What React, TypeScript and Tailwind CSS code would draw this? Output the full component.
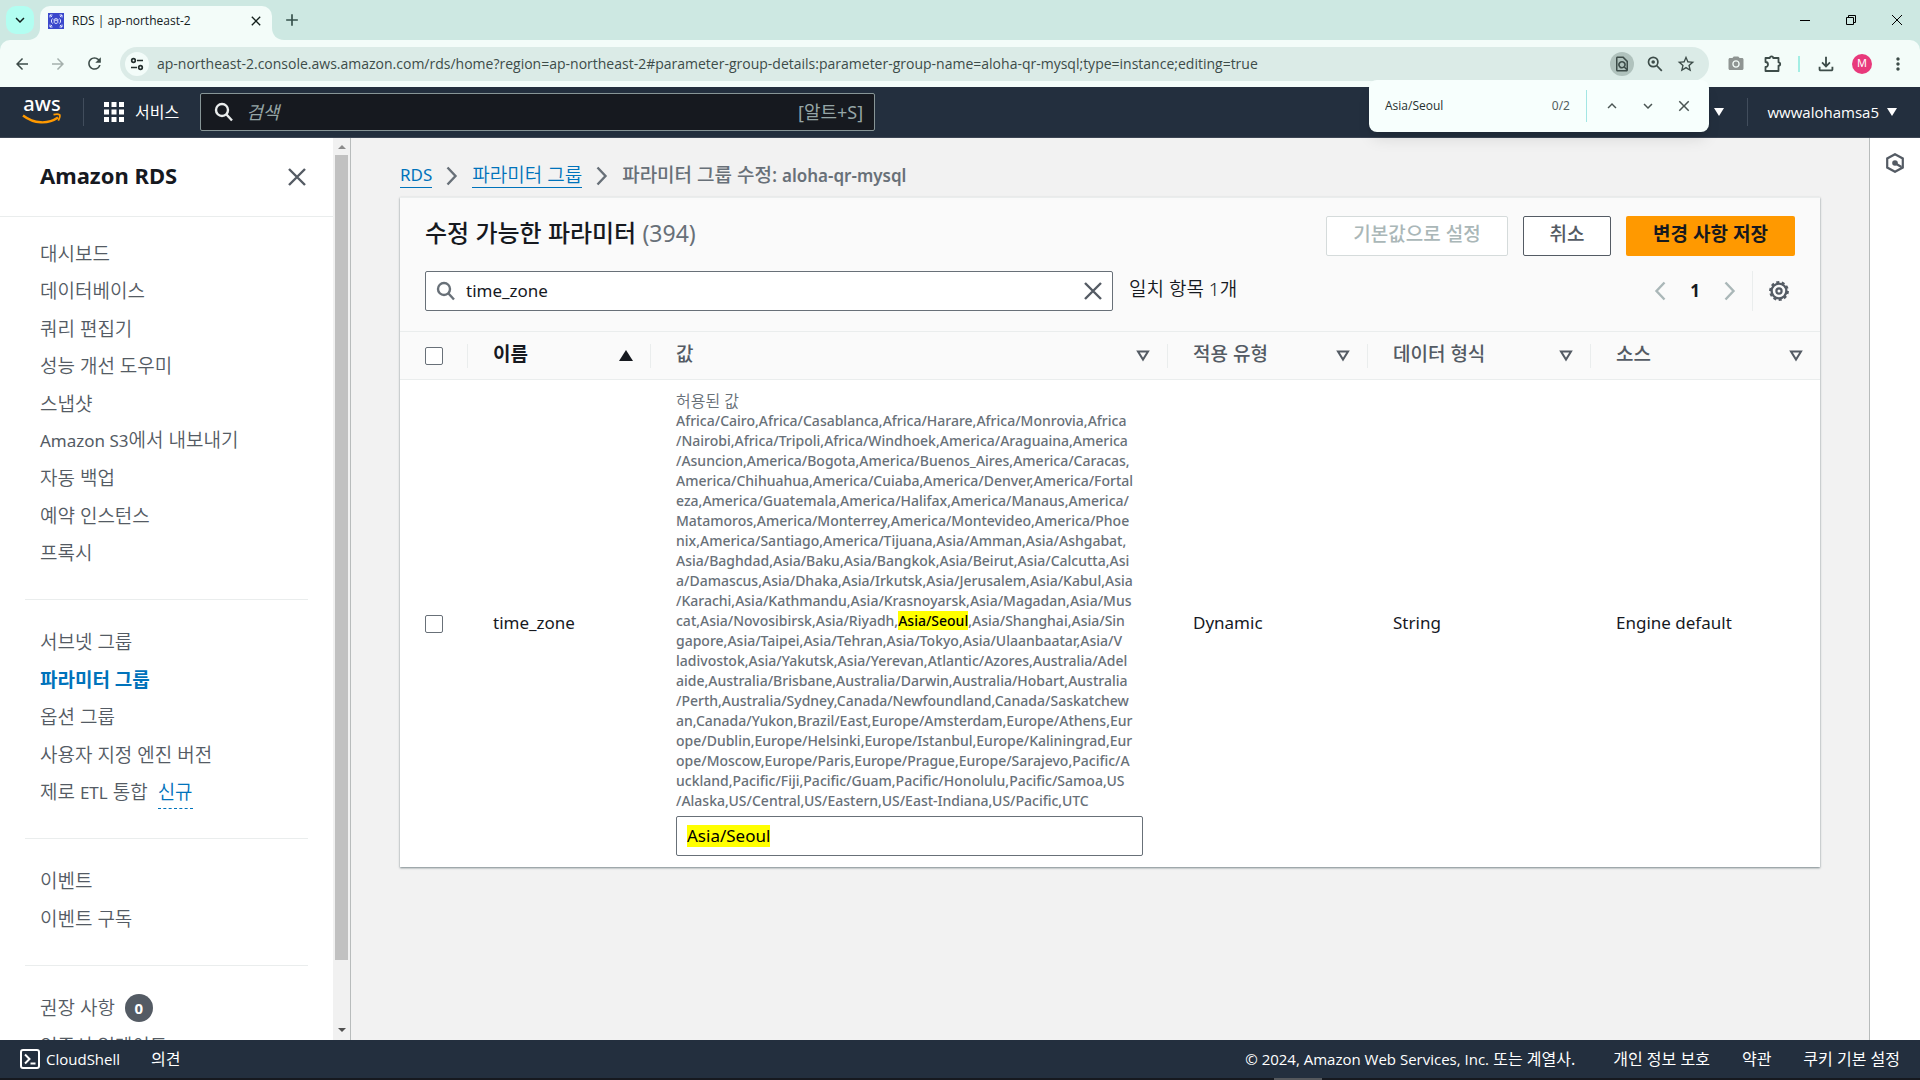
import { useState } from "react";
import type { ReactNode } from "react";
import {
  MdAdd,
  MdArrowBack,
  MdArrowForward,
  MdClose,
  MdKeyboardArrowDown,
  MdKeyboardArrowUp,
  MdMoreVert,
  MdOutlineFileDownload,
  MdOutlineFindInPage,
  MdPhotoCamera,
  MdRefresh,
  MdStarBorder,
} from "react-icons/md";

type NavItem = { label: ReactNode; active?: boolean; extra?: ReactNode };

const DATABASE_LINKS: NavItem[] = [
  { label: "대시보드" },
  { label: "데이터베이스" },
  { label: "쿼리 편집기" },
  { label: "성능 개선 도우미" },
  { label: "스냅샷" },
  {
    label: (
      <>
        <span className="text-[17px] font-normal">Amazon S3</span>에서 내보내기
      </>
    ),
  },
  { label: "자동 백업" },
  { label: "예약 인스턴스" },
  { label: "프록시" },
];

const GROUP_LINKS: NavItem[] = [
  { label: "서브넷 그룹" },
  { label: "파라미터 그룹", active: true },
  { label: "옵션 그룹" },
  { label: "사용자 지정 엔진 버전" },
  {
    label: (
      <>
        제로 <span className="text-[17px] font-normal">ETL</span> 통합
      </>
    ),
    extra: (
      <button className="ml-[10px] h-[28px] self-start border-b border-dashed border-[#0073bb] pb-[5px] font-[350] text-[#0073bb]">
        신규
      </button>
    ),
  },
];

const EVENT_LINKS: NavItem[] = [{ label: "이벤트" }, { label: "이벤트 구독" }];

const ADVICE_LINKS: NavItem[] = [
  {
    label: "권장 사항",
    extra: (
      <span className="ml-[10px] flex size-7 shrink-0 items-center justify-center rounded-full bg-[#545b64] text-[15px] font-bold text-white">
        0
      </span>
    ),
  },
  { label: "인증서 업데이트" },
];

// The console breaks this list mid-word, so the rows are kept as they are shown
const ALLOWED_ROWS = [
  "Africa/Cairo,Africa/Casablanca,Africa/Harare,Africa/Monrovia,Africa",
  "/Nairobi,Africa/Tripoli,Africa/Windhoek,America/Araguaina,America",
  "/Asuncion,America/Bogota,America/Buenos_Aires,America/Caracas,",
  "America/Chihuahua,America/Cuiaba,America/Denver,America/Fortal",
  "eza,America/Guatemala,America/Halifax,America/Manaus,America/",
  "Matamoros,America/Monterrey,America/Montevideo,America/Phoe",
  "nix,America/Santiago,America/Tijuana,Asia/Amman,Asia/Ashgabat,",
  "Asia/Baghdad,Asia/Baku,Asia/Bangkok,Asia/Beirut,Asia/Calcutta,Asi",
  "a/Damascus,Asia/Dhaka,Asia/Irkutsk,Asia/Jerusalem,Asia/Kabul,Asia",
  "/Karachi,Asia/Kathmandu,Asia/Krasnoyarsk,Asia/Magadan,Asia/Mus",
  "cat,Asia/Novosibirsk,Asia/Riyadh,Asia/Seoul,Asia/Shanghai,Asia/Sin",
  "gapore,Asia/Taipei,Asia/Tehran,Asia/Tokyo,Asia/Ulaanbaatar,Asia/V",
  "ladivostok,Asia/Yakutsk,Asia/Yerevan,Atlantic/Azores,Australia/Adel",
  "aide,Australia/Brisbane,Australia/Darwin,Australia/Hobart,Australia",
  "/Perth,Australia/Sydney,Canada/Newfoundland,Canada/Saskatchew",
  "an,Canada/Yukon,Brazil/East,Europe/Amsterdam,Europe/Athens,Eur",
  "ope/Dublin,Europe/Helsinki,Europe/Istanbul,Europe/Kaliningrad,Eur",
  "ope/Moscow,Europe/Paris,Europe/Prague,Europe/Sarajevo,Pacific/A",
  "uckland,Pacific/Fiji,Pacific/Guam,Pacific/Honolulu,Pacific/Samoa,US",
  "/Alaska,US/Central,US/Eastern,US/East-Indiana,US/Pacific,UTC",
];

const COLUMNS = ["값", "적용 유형", "데이터 형식", "소스"];

function TabFlare({ className }: { className: string }) {
  return (
    <svg viewBox="0 0 12 12" className={`absolute bottom-0 size-3 fill-[#f3fcf9] ${className}`}>
      <path d="M12 0v12H0C7 12 12 7 12 0Z" />
    </svg>
  );
}

function TabStrip() {
  return (
    <div className="flex h-10 shrink-0 items-end bg-[#cde8e2]">
      <button aria-label="Search tabs" className="mb-[6px] ml-[6px] flex size-7 items-center justify-center rounded-[10px] bg-[#b2fef1]">
        <MdKeyboardArrowDown className="size-[18px] text-[#12201d]" />
      </button>
      <div className="relative ml-[6px] flex h-[34px] w-[232px] items-center rounded-t-[10px] bg-[#f3fcf9] pb-[5px] pl-2">
        <TabFlare className="-left-3" />
        <TabFlare className="-right-3 -scale-x-100" />
        <svg viewBox="0 0 16 16" className="size-4 shrink-0">
          <rect width="16" height="16" fill="#3b48cc" />
          <g fill="none" stroke="#dfe3ff" strokeWidth="1">
            <path d="M2 4.500V2h2.500M11.500 2H14v2.500M14 11.500V14h-2.500M4.500 14H2v-2.500M2 2l2 2M14 2l-2 2M14 14l-2-2M2 14l2-2" />
            <ellipse cx="8" cy="6.500" rx="1.800" ry="0.800" />
            <path d="M6.200 6.500v3c0 1.200 3.600 1.200 3.600 0v-3M4.500 5.500C3 7 3 9 4.500 10.500M11.500 5.500c1.500 1.500 1.500 3.500 0 5" />
          </g>
        </svg>
        <span className="ml-2 flex-1 pt-px font-['Open_Sans'] text-[12px] text-[#14201d]">RDS | ap-northeast-2</span>
        <button aria-label="Close tab" className="mr-2">
          <MdClose className="size-4 text-[#14201d]" />
        </button>
      </div>
      <button aria-label="New tab" className="mb-[10px] ml-[10px]">
        <MdAdd className="size-5 text-[#35504b]" />
      </button>
      <div className="mb-[14px] ml-auto flex items-center gap-[34px] pr-[17px] text-black">
        <button aria-label="Minimize">
          <svg viewBox="0 0 12 12" className="size-3" stroke="currentColor">
            <path d="M1 6.500h10" />
          </svg>
        </button>
        <button aria-label="Restore">
          <svg viewBox="0 0 12 12" className="size-3" fill="none" stroke="currentColor">
            <path d="M1.500 3.500h7v7h-7zM3.500 3.500v-2h7v7h-2" />
          </svg>
        </button>
        <button aria-label="Close window">
          <svg viewBox="0 0 12 12" className="size-3" fill="none" stroke="currentColor">
            <path d="m1 1 10 10M11 1 1 11" />
          </svg>
        </button>
      </div>
    </div>
  );
}

function AddressBar() {
  return (
    <div className="flex h-[47px] shrink-0 items-center bg-[#cde8e2]">
      <div className="flex h-full flex-1 items-center rounded-t-[10px] bg-[#f3fcf9] text-[#3d4c49]">
        <button aria-label="Back" className="ml-[13px]">
          <MdArrowBack className="size-[18px]" />
        </button>
        <button aria-label="Forward" className="ml-[18px] text-[#a5b0ad]">
          <MdArrowForward className="size-[18px]" />
        </button>
        <button aria-label="Reload" className="ml-[18px]">
          <MdRefresh className="size-[19px]" />
        </button>
        <div className="ml-4 flex h-[34px] flex-1 items-center rounded-full bg-[#dbebe7] pl-[5px] pr-[13px]">
          <button aria-label="Site information" className="flex size-6 shrink-0 items-center justify-center rounded-full bg-[#f3fcf9]">
            <svg viewBox="0 0 16 16" className="size-4" fill="none" stroke="#24302e" strokeWidth="1.700">
              <circle cx="4.500" cy="4.500" r="1.800" />
              <path d="M8 4.500h6M2 11.500h6" />
              <circle cx="11.500" cy="11.500" r="1.800" />
            </svg>
          </button>
          <input
            aria-label="Address"
            className="ml-2 min-w-0 flex-1 bg-transparent font-['Open_Sans'] text-[14px] text-[#3d4c49] outline-none"
            defaultValue="ap-northeast-2.console.aws.amazon.com/rds/home?region=ap-northeast-2#parameter-group-details:parameter-group-name=aloha-qr-mysql;type=instance;editing=true"
          />
          <button aria-label="Find in page" className="flex size-6 items-center justify-center rounded-full bg-[#b0c2bd]">
            <MdOutlineFindInPage className="size-[18px]" />
          </button>
          <button aria-label="Zoom" className="ml-3">
            <svg viewBox="0 0 18 18" className="size-[18px]" fill="none" stroke="currentColor" strokeWidth="1.700">
              <circle cx="7.200" cy="7" r="4.700" />
              <path d="m10.600 10.500 5.200 5.300" />
              <circle cx="7.200" cy="7" r="1.800" fill="currentColor" stroke="none" />
            </svg>
          </button>
          <button aria-label="Bookmark" className="ml-3">
            <MdStarBorder className="size-5" />
          </button>
        </div>
        <button aria-label="Screenshot" className="ml-[18px] text-[#8f9593]">
          <MdPhotoCamera className="size-[18px]" />
        </button>
        <button aria-label="Extensions" className="ml-[18px]">
          <svg viewBox="0 0 20 20" className="size-5" fill="none" stroke="currentColor" strokeWidth="1.800" strokeLinejoin="round">
            <path d="M2.500 4h4.300a1.700 1.700 0 0 1 3.400 0h5.300v4.300a1.700 1.700 0 0 1 0 3.400V17h-13v-4a2.500 2.500 0 0 0 0-5Z" />
          </svg>
        </button>
        <span className="ml-[15px] h-4 w-[2px] bg-[#a3eee4]" />
        <button aria-label="Downloads" className="ml-[15px]">
          <MdOutlineFileDownload className="size-[22px]" />
        </button>
        <button aria-label="Profile" className="ml-[15px] flex size-5 items-center justify-center rounded-full bg-[#e8397b] text-[11px] text-white">
          M
        </button>
        <button aria-label="Menu" className="ml-4 mr-3">
          <MdMoreVert className="size-5" />
        </button>
      </div>
    </div>
  );
}

function FindBar() {
  return (
    <div className="absolute right-[211px] top-20 flex h-[52px] w-[340px] items-center rounded-lg bg-[#f7fffd] px-4 text-[12px] text-[#27312f] shadow-lg">
      <input aria-label="Find" defaultValue="Asia/Seoul" className="min-w-0 flex-1 bg-transparent font-['Open_Sans'] outline-none" />
      <span className="text-[#55605e]">0/2</span>
      <span className="mx-4 h-8 w-px bg-[#a3e6e4]" />
      <div className="flex gap-[18px] text-[#4a5553]">
        <button aria-label="Previous">
          <MdKeyboardArrowUp className="size-[18px]" />
        </button>
        <button aria-label="Next">
          <MdKeyboardArrowDown className="size-[18px]" />
        </button>
        <button aria-label="Close find bar">
          <MdClose className="size-[18px]" />
        </button>
      </div>
    </div>
  );
}

function DownCaret() {
  return (
    <svg viewBox="0 0 10 8" className="h-2 w-[10px] fill-white">
      <path d="M0 0h10L5 8Z" />
    </svg>
  );
}

function ConsoleHeader() {
  return (
    <header className="flex h-[51px] shrink-0 items-center border-b border-[#3c4553] bg-[#232f3e] pr-[23px] text-white">
      <a href="#home" aria-label="AWS" className="ml-[22px] flex w-10 flex-col items-center pb-1">
        <span className="text-[20px] leading-[17px] font-medium">aws</span>
        <svg viewBox="0 0 40 12" className="mt-px h-3 w-10" fill="none" stroke="#ff9900">
          <path d="M1 2.500c11 8.500 25 9 35 2" strokeWidth="2.400" />
          <path d="M31.500 1.600c2.500-.6 5-.6 6 .1.700.8.100 3.500-1.200 6" strokeWidth="1.800" />
        </svg>
      </a>
      <span className="ml-[21px] h-7 w-px bg-[#414d5c]" />
      <button className="ml-5 flex items-center gap-[11px] text-[16px]">
        <svg viewBox="0 0 20 20" className="size-5 fill-white">
          <path d="M0 0h5v5H0zM7.500 0h5v5h-5zM15 0h5v5h-5zM0 7.500h5v5H0zM7.500 7.500h5v5h-5zM15 7.500h5v5h-5zM0 15h5v5H0zM7.500 15h5v5h-5zM15 15h5v5h-5z" />
        </svg>
        서비스
      </button>
      <label className="ml-[21px] flex h-[38px] w-[675px] items-center rounded-[2px] border border-[#879596] bg-[#16191f] px-[11px]">
        <svg viewBox="0 0 20 20" className="mx-[2px] size-5 shrink-0" fill="none" stroke="#eaeded" strokeWidth="2.400">
          <circle cx="8" cy="8" r="6" />
          <path d="m12.500 12.500 5.500 6" />
        </svg>
        <input
          aria-label="검색"
          placeholder="검색"
          className="ml-[10px] min-w-0 flex-1 bg-transparent text-[18px] italic outline-none placeholder:text-[#95a5a6]"
        />
        <span className="text-[18px] text-[#95a5a6]">[알트+S]</span>
      </label>
      <div className="ml-auto flex items-center">
        <button aria-label="Region">
          <DownCaret />
        </button>
        <span className="ml-[23px] h-7 w-px bg-[#414d5c]" />
        <button className="ml-5 flex items-center gap-2 font-['Open_Sans'] text-[15px] font-medium">
          wwwalohamsa5
          <DownCaret />
        </button>
      </div>
    </header>
  );
}

function NavGroup({ items, className }: { items: NavItem[]; className: string }) {
  return (
    <ul className={`flex flex-col justify-between px-10 ${className}`}>
      {items.map((item, i) => (
        <li key={i} className="flex h-[22px] items-center whitespace-nowrap text-[19px] leading-[22px]">
          <a href="#nav" className={item.active ? "font-bold text-[#0073bb]" : "font-[350] text-[#545b64]"}>
            {item.label}
          </a>
          {item.extra}
        </li>
      ))}
    </ul>
  );
}

function NavDivider() {
  return <hr className="mx-[25px] mt-[35px] mb-[31px] border-[#eaeded]" />;
}

function Sidebar({ onClose }: { onClose: () => void }) {
  return (
    <aside className="flex w-[351px] shrink-0 overflow-hidden border-r border-[#b8bcbc] bg-white">
      <nav className="min-w-0 flex-1 overflow-hidden">
        <div className="flex h-[79px] items-center justify-between border-b border-[#eaeded] pl-10 pr-[27px]">
          <h2 className="pb-1 text-[22px] font-bold text-[#16191f]">Amazon RDS</h2>
          <button aria-label="닫기" onClick={onClose}>
            <svg viewBox="0 0 18 18" className="size-[18px]" stroke="#545b64" strokeWidth="2.400">
              <path d="m1 1 16 16M17 1 1 17" />
            </svg>
          </button>
        </div>
        <NavGroup items={DATABASE_LINKS} className="mt-[26px] h-[321px]" />
        <NavDivider />
        <NavGroup items={GROUP_LINKS} className="h-[172px]" />
        <NavDivider />
        <NavGroup items={EVENT_LINKS} className="h-[60px]" />
        <NavDivider />
        <NavGroup items={ADVICE_LINKS} className="h-[60px]" />
      </nav>
      {/* scroll track */}
      <div className="flex w-[17px] flex-col items-center bg-[#f1f1f1]">
        <svg viewBox="0 0 8 4" className="mt-[7px] mb-[6px] h-1 w-2 shrink-0 fill-[#8b8b8b]">
          <path d="M0 4h8L4 0Z" />
        </svg>
        <div className="w-[13px] flex-[805] bg-[#c1c1c1]" />
        <div className="flex-[68]" />
        <svg viewBox="0 0 8 4" className="mb-2 h-1 w-2 shrink-0 fill-[#505050]">
          <path d="M0 0h8L4 4Z" />
        </svg>
      </div>
    </aside>
  );
}

function Chevron({ left, className }: { left?: boolean; className?: string }) {
  return (
    <svg viewBox="0 0 12 20" className={`h-5 w-3 ${className ?? ""}`} fill="none" stroke="currentColor" strokeWidth="2.400">
      <path d={left ? "M10.500 1.500 2.500 10l8 8.500" : "m1.500 1.500 8 8.500-8 8.500"} />
    </svg>
  );
}

function Breadcrumbs() {
  return (
    <nav aria-label="breadcrumb" className="flex h-[59px] items-center pt-[16px] text-[19px] leading-[24px]">
      <a href="#rds" className="border-b border-[#0073bb] text-[17px] text-[#0073bb]">
        RDS
      </a>
      <Chevron className="mx-[14px] text-[#687078]" />
      <a href="#groups" className="border-b border-[#0073bb] font-[350] text-[#0073bb]">
        파라미터 그룹
      </a>
      <Chevron className="mx-[14px] text-[#687078]" />
      <span className="font-medium text-[#687078]">
        파라미터 그룹 수정: <span className="text-[17px] font-semibold">aloha-qr-mysql</span>
      </span>
    </nav>
  );
}

function ColumnFilter() {
  return (
    <svg viewBox="0 0 14 12" className="h-3 w-[14px]" fill="none" stroke="#545b64" strokeWidth="2">
      <path d="M2 1.500h10l-5 8Z" />
    </svg>
  );
}

function Checkbox({ label }: { label: string }) {
  return (
    <input
      type="checkbox"
      aria-label={label}
      className="block size-[18px] appearance-none rounded-[2px] border border-[#687078] bg-white checked:bg-[#0073bb]"
    />
  );
}

function ParameterTable() {
  const [value, setValue] = useState("Asia/Seoul");

  return (
    <table className="w-full table-fixed text-left text-[17px] text-[#16191f]">
      <colgroup>
        <col className="w-[68px]" />
        <col className="w-[183px]" />
        <col className="w-[517px]" />
        <col className="w-[200px]" />
        <col className="w-[223px]" />
        <col />
      </colgroup>
      <thead className="border-y border-[#eaeded] bg-[#fafafa]">
        <tr className="h-[48px] text-[19px]">
          <th>
            <div className="flex h-6 items-center border-r border-[#eaeded] pl-[25px]">
              <Checkbox label="모두 선택" />
            </div>
          </th>
          <th className="font-bold">
            <div className="flex h-6 items-center justify-between border-r border-[#eaeded] pl-[25px] pr-[17px]">
              <span className="pb-[3px]">이름</span>
              <svg viewBox="0 0 14 12" className="h-3 w-[14px] fill-[#16191f]">
                <path d="M0 11h14L7 0Z" />
              </svg>
            </div>
          </th>
          {COLUMNS.map((name) => (
            <th key={name} className="group font-medium text-[#545b64]">
              <div className="flex h-6 items-center justify-between border-r border-[#eaeded] pl-[25px] pr-[17px] group-last:border-r-0">
                <span className="pb-[3px]">{name}</span>
                <ColumnFilter />
              </div>
            </th>
          ))}
        </tr>
      </thead>
      <tbody className="bg-white">
        <tr>
          <td className="pl-[25px]">
            <Checkbox label="time_zone 선택" />
          </td>
          <td className="pb-[2px] pl-[25px]">time_zone</td>
          <td className="px-[25px] py-[11px]">
            <div className="text-[14px] leading-[20px] font-medium text-[#687078]">
              <p className="text-[16px] leading-[20px] font-[350]">허용된 값</p>
              {ALLOWED_ROWS.map((row) => {
                const [before, after] = row.split("Asia/Seoul");
                return (
                  <p key={row} className="whitespace-nowrap">
                    {before}
                    {after !== undefined && (
                      <>
                        <mark className="bg-[#ffff00] text-black">Asia/Seoul</mark>
                        {after}
                      </>
                    )}
                  </p>
                );
              })}
            </div>
            <div className="mt-[5px] flex h-10 items-center rounded-[2px] border border-[#687078] px-[10px]">
              <input
                aria-label="time_zone 값"
                value={value}
                onChange={(e) => setValue(e.target.value)}
                className="field-sizing-content h-[22px] bg-[#ffff00] text-black outline-none"
              />
            </div>
          </td>
          <td className="pb-[2px] pl-[25px]">Dynamic</td>
          <td className="pb-[2px] pl-[25px]">String</td>
          <td className="pb-[2px] pl-[25px]">Engine default</td>
        </tr>
      </tbody>
    </table>
  );
}

function ParameterCard() {
  const [query, setQuery] = useState("time_zone");

  return (
    <section className="border-t border-[#eaeded] bg-[#fafafa] shadow-[0_1px_2px_0_rgba(0,28,36,0.5)]">
      <div className="flex items-start px-[25px] pt-[18px]">
        <h1 className="text-[24px] leading-[34px] font-medium text-[#16191f]">
          수정 가능한 파라미터 <span className="text-[23px] font-normal text-[#687078]">(394)</span>
        </h1>
        <div className="ml-auto flex gap-[15px] text-[19px] font-medium">
          <button disabled className="h-10 w-[182px] rounded-[2px] border border-[#d5dbdb] bg-white pb-1 text-[#aab7b8]">
            기본값으로 설정
          </button>
          <button className="h-10 w-[88px] rounded-[2px] border border-[#545b64] bg-white pb-1 text-[#545b64]">취소</button>
          <button className="h-10 w-[169px] rounded-[2px] bg-[#ff9900] pb-1 font-bold text-[#16191f]">변경 사항 저장</button>
        </div>
      </div>
      <div className="flex items-center px-[25px] pt-[15px] pb-5">
        <div className="flex h-10 w-[688px] items-center rounded-[2px] border border-[#687078] bg-white px-[10px]">
          <svg viewBox="0 0 20 20" className="size-5 shrink-0" fill="none" stroke="#687078" strokeWidth="2.400">
            <circle cx="8" cy="8" r="6" />
            <path d="m12.500 12.500 5.500 6" />
          </svg>
          <input
            aria-label="파라미터 필터링"
            value={query}
            onChange={(e) => setQuery(e.target.value)}
            className="ml-[10px] min-w-0 flex-1 bg-transparent text-[17px] text-[#16191f] outline-none"
          />
          <button aria-label="지우기" onClick={() => setQuery("")}>
            <svg viewBox="0 0 18 18" className="size-[18px]" stroke="#545b64" strokeWidth="2.400">
              <path d="m1 1 16 16M17 1 1 17" />
            </svg>
          </button>
        </div>
        <span className="ml-4 pb-1 text-[19px] font-[350] text-[#16191f]">일치 항목 1개</span>
        <div className="ml-auto flex h-10 items-center">
          <button aria-label="이전 페이지" className="text-[#aab7b8]">
            <Chevron left />
          </button>
          <button className="mx-6 text-[17px] font-bold text-[#16191f]">1</button>
          <button aria-label="다음 페이지" className="text-[#aab7b8]">
            <Chevron />
          </button>
          <span className="ml-4 h-10 w-px bg-[#eaeded]" />
          <button aria-label="기본 설정" className="ml-4 mr-[6px]">
            <svg viewBox="0 0 20 20" className="size-5" fill="none" stroke="#545b64">
              <circle cx="10" cy="10" r="7.400" strokeWidth="2.400" />
              <circle cx="10" cy="10" r="8.900" strokeWidth="2" pathLength="20" strokeDasharray="1.100 0.900" />
              <circle cx="10" cy="10" r="2.600" strokeWidth="2.200" />
            </svg>
          </button>
        </div>
      </div>
      <ParameterTable />
    </section>
  );
}

function ConsoleFooter() {
  return (
    <footer className="shrink-0 bg-[#232f3e] text-white">
      <div className="flex h-[38px] items-center px-5 text-[16px]">
        <button className="flex items-center gap-[6px] font-['Open_Sans'] text-[15px] font-medium">
          <svg viewBox="0 0 20 20" className="size-5" fill="none" stroke="white" strokeWidth="2">
            <rect x="1" y="1" width="18" height="18" rx="2" />
            <path d="m5 5.500 4.500 4.500L5 14.500M10.500 14.500h5" />
          </svg>
          CloudShell
        </button>
        <button className="ml-[31px]">의견</button>
        <span className="ml-auto">
          <span className="font-['Open_Sans'] text-[15px] font-medium">© 2024, Amazon Web Services, Inc.</span> 또는 계열사.
        </span>
        <a href="#privacy" className="ml-[38px]">
          개인 정보 보호
        </a>
        <a href="#terms" className="ml-8">
          약관
        </a>
        <a href="#cookies" className="ml-8">
          쿠키 기본 설정
        </a>
      </div>
      <div className="flex h-[2px] justify-center bg-[#16191f]">
        <span className="ml-[676px] w-12 bg-[#55585c]" />
      </div>
    </footer>
  );
}

export default function App() {
  const [navOpen, setNavOpen] = useState(true);

  return (
    <div className="relative flex h-screen flex-col overflow-hidden bg-[#f2f2f2] font-['Noto_Sans','Noto_Sans_CJK_KR',sans-serif]">
      <TabStrip />
      <AddressBar />
      <ConsoleHeader />
      <div className="flex min-h-0 flex-1">
        {navOpen && <Sidebar onClose={() => setNavOpen(false)} />}
        <main className="min-w-0 flex-1 overflow-hidden px-[49px]">
          <Breadcrumbs />
          <ParameterCard />
        </main>
        <div className="w-[51px] shrink-0 border-l border-[#b8bcbc] bg-white pt-[15px] pl-[15px]">
          <button aria-label="도구 열기">
            <svg viewBox="0 0 20 20" className="size-5" fill="none" stroke="#545b64" strokeWidth="2.200">
              <path d="M10 1.200 17.800 5.500v9L10 18.800 2.200 14.500v-9Z" />
              <circle cx="10" cy="10" r="2.800" fill="#545b64" stroke="none" />
              <path d="m10.500 10.500 6 3.500" />
            </svg>
          </button>
        </div>
      </div>
      <ConsoleFooter />
      <FindBar />
    </div>
  );
}
